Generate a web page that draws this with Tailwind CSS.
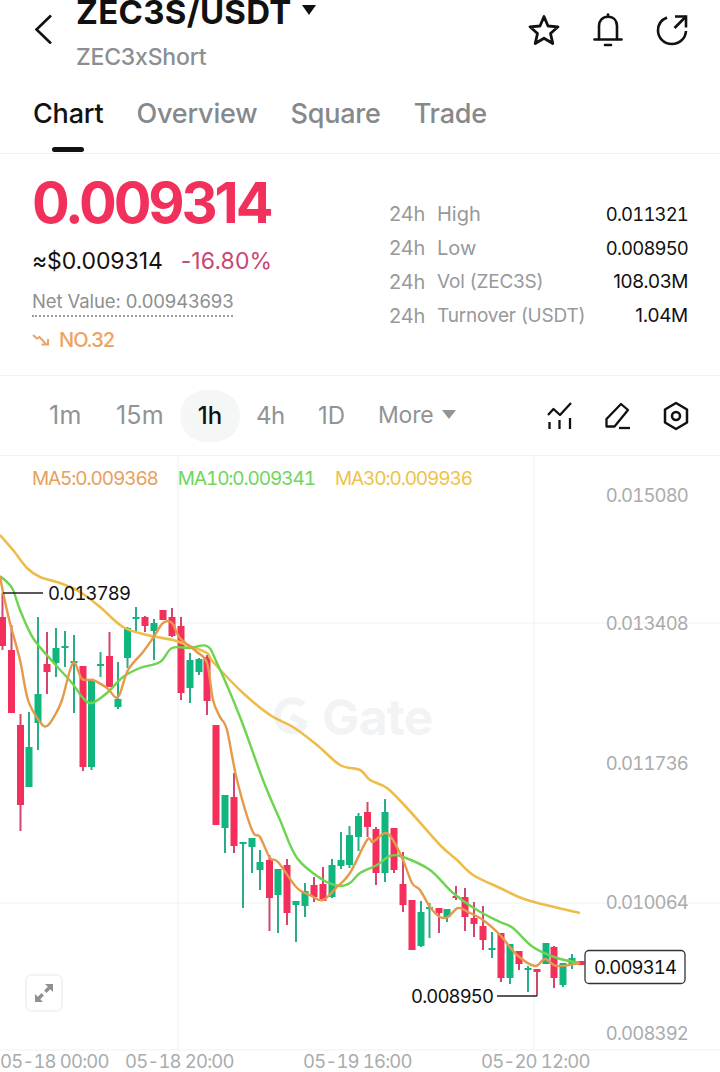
<!DOCTYPE html>
<html lang="en">
<head>
    <meta charset="UTF-8" />
    <meta name="viewport" content="width=device-width, initial-scale=1.0"/>
    <title>ZEC3S/USDT</title>
    <script src="https://cdn.jsdelivr.net/npm/@tailwindcss/browser@4"></script>
</head>
<body class="bg-white font-['Inter',sans-serif] text-[#111] w-[720px] h-[1072px] overflow-hidden">

    <!-- Header -->
    <header class="flex h-[76px] pl-[32px] pr-[32px]">
        <svg class="mt-[14px] shrink-0" width="22" height="30" viewBox="0 0 22 30" fill="none" stroke="#111" stroke-width="2.6"><path d="M19 1.5 4.5 15.500 19 29.500"/></svg>
        <div class="ml-[22px] flex-1">
            <div class="flex items-center h-[24px]">
                <h1 class="text-[33px] leading-[24px] font-bold tracking-[0.3px] whitespace-nowrap">ZEC3S/USDT</h1>
                <div class="ml-[10px] -mt-[4px] w-0 h-0 border-x-[7px] border-x-transparent border-t-[10px] border-t-[#111]"></div>
            </div>
            <p class="mt-[20px] text-[23px] leading-[26px] font-medium text-[#8b8f91] tracking-[-0.2px]">ZEC3xShort</p>
        </div>
        <div class="flex gap-[30px] mt-[13px] mr-[-1px] h-[34px]">
            <svg width="34" height="34" viewBox="0 0 34 34" fill="none" stroke="#111" stroke-width="2.8" stroke-linejoin="round"><path d="M17 3.500 21 13 31 13.800 23.500 20.500 25.800 30.500 17 25.200 8.200 30.500 10.500 20.500 3 13.800 13 13Z"/></svg>
            <svg width="34" height="34" viewBox="0 0 34 34" fill="none" stroke="#111" stroke-width="2.6" stroke-linecap="round"><path d="M8 26V13C8 7.500 11.500 3.800 17 3.800S26 7.500 26 13V26"/><path d="M3.500 26.500H30.500"/><path d="M17 1.500V3.500"/><path d="M14 32H20"/></svg>
            <svg width="34" height="34" viewBox="0 0 34 34" fill="none" stroke="#111" stroke-width="2.6"><path d="M12 4.500C6.500 6.700 3 11.500 3 17.500 3 25 9.200 31 17 31 24.500 31 30.500 25.500 31 18"/><path d="M20 3.500H31V14.500"/><path d="M31 3.500 19.500 15"/></svg>
        </div>
    </header>

    <!-- Tabs -->
    <nav class="flex gap-[33px] pl-[33px] h-[78px] border-b border-[#f0f1f2] relative text-[27px] leading-[32px] font-medium text-[#85898b] tracking-[-0.2px] pt-[22px]">
        <span class="text-[#111]">Chart</span>
        <span>Overview</span>
        <span>Square</span>
        <span>Trade</span>
        <div class="absolute left-[52px] bottom-[1px] w-[32px] h-[5px] rounded-full bg-[#111]"></div>
    </nav>

    <!-- Price -->
    <section class="flex h-[222px] border-b border-[#f2f3f4]">
        <div class="w-[360px] pl-[32px] pt-[21px]">
            <div class="text-[56px] leading-[56px] font-bold text-[#f2305c] tracking-[-3.1px]">0.009314</div>
            <div class="flex mt-[16px] text-[23px] leading-[28px] tracking-[-0.1px]">
                <span>≈$0.009314</span>
                <span class="ml-[18px] text-[#c8476f] tracking-[0.1px]">-16.80%</span>
            </div>
            <div class="inline-block mt-[13px] text-[18.5px] leading-[27px] text-[#8c9092] tracking-[-0.1px] border-b-2 border-dotted border-[#9a9ea0]">Net Value: 0.00943693</div>
            <div class="flex items-center mt-[11px] text-[20px] leading-[24px] font-medium text-[#eda364] tracking-[-1px]">
                <svg class="mr-[9px]" width="18" height="14" viewBox="0 0 18 14" fill="none" stroke="#eda364" stroke-width="2"><path d="M1 2 5 5.500 7.500 4 14 11"/><path d="M9.500 11.500H16V6"/></svg>
                NO.32
            </div>
        </div>
        <div class="flex-1 pt-[43px] pr-[32px] pl-[29px] text-[20px] leading-[34px]">
            <div class="flex"><span class="text-[#97999b] w-[48px] tracking-[-0.2px]">24h</span><span class="text-[#97999b] flex-1">High</span><span class="text-[18.5px] tracking-[-0.85px] tabular-nums">0.011321</span></div>
            <div class="flex"><span class="text-[#97999b] w-[48px] tracking-[-0.2px]">24h</span><span class="text-[#97999b] flex-1">Low</span><span class="text-[18.5px] tracking-[-0.85px] tabular-nums">0.008950</span></div>
            <div class="flex"><span class="text-[#97999b] w-[48px] tracking-[-0.2px]">24h</span><span class="text-[#97999b] flex-1 text-[19px] tracking-[-0.2px]">Vol (ZEC3S)</span><span class="text-[19px] tracking-[-0.3px]">108.03M</span></div>
            <div class="flex"><span class="text-[#97999b] w-[48px] tracking-[-0.2px]">24h</span><span class="text-[#97999b] flex-1 text-[19px] tracking-[-0.2px]">Turnover (USDT)</span><span class="text-[19px] tracking-[-0.3px]">1.04M</span></div>
        </div>
    </section>

    <!-- Period bar -->
    <div class="flex items-center h-[80px] border-b border-[#f2f3f4] text-[24px] text-[#909496] relative">
        <span class="ml-[49px] w-[34px] text-[25px] tracking-[0.4px]">1m</span>
        <span class="ml-[33px] w-[48px] text-[25px] tracking-[0.2px]">15m</span>
        <span class="ml-[16px] w-[60px] h-[52px] rounded-full bg-[#f5f6f6] text-[#111] font-medium flex items-center justify-center">1h</span>
        <span class="ml-[16px] w-[27px] tracking-[-0.5px]">4h</span>
        <span class="ml-[35px] w-[27px]">1D</span>
        <span class="ml-[33px] text-[23px] tracking-[-0.2px] w-[55px]">More</span>
        <div class="ml-[9px] -mt-[2px] w-0 h-0 border-x-[7px] border-x-transparent border-t-[9px] border-t-[#909496]"></div>
        <div class="ml-auto mr-[30px] flex gap-[30px]">
            <svg width="28" height="30" viewBox="0 0 28 30" fill="none" stroke="#111" stroke-width="2.3" stroke-linejoin="round"><path d="M2 14 7.500 8 14 14 25 2"/><path d="M3.500 21V28M13.500 19V28M24 17V28"/></svg>
            <svg width="28" height="30" viewBox="0 0 28 30" fill="none" stroke="#111" stroke-width="2.300" stroke-linejoin="round"><path d="M17 3 24 9 10.500 25.500H2.500V18Z"/><path d="M15 27H26"/></svg>
            <svg width="28" height="30" viewBox="0 0 28 30" fill="none" stroke="#111" stroke-width="2.500" stroke-linejoin="round"><path d="M14 2 25 8.500V21.500L14 28 3 21.500V8.500Z"/><circle cx="14" cy="15" r="4"/></svg>
        </div>
    </div>

    <!-- Chart: free canvas, y starts at 456 -->
    <div class="relative h-[616px]">
        <svg class="absolute inset-0 tabular-nums tracking-[-0.85px]" width="720" height="616" viewBox="0 456 720 616" font-family="Inter, sans-serif" font-size="18.5">
            <path d="M178 456V1050M534 456V1050M0 623H720M0 903H720M0 1050H720" stroke="#f5f6f6" stroke-width="1.500"/>
            <path d="M303 705A15 15 0 1 0 305 724M291 716l12 7-8 10" fill="none" stroke="#f2f3f4" stroke-width="7"/>
            <text x="322" y="735" font-size="50" font-weight="700" fill="#f2f3f4">Gate</text>
            <g id="candles"></g>
            <path id="ma30" fill="none" stroke="#eebd49" stroke-width="2.600" stroke-linejoin="round"/>
            <path id="ma10" fill="none" stroke="#6cd44f" stroke-width="2.400" stroke-linejoin="round"/>
            <path id="ma5" fill="none" stroke="#e59a4a" stroke-width="2.400" stroke-linejoin="round"/>

            <g fill="#a9acae">
                <text x="688" y="502" text-anchor="end">0.015080</text>
                <text x="688" y="630" text-anchor="end">0.013408</text>
                <text x="688" y="770" text-anchor="end">0.011736</text>
                <text x="688" y="909" text-anchor="end">0.010064</text>
                <text x="688" y="1040" text-anchor="end">0.008392</text>
                <text x="0" y="1068">05-18 00:00</text>
                <text x="125" y="1068">05-18 20:00</text>
                <text x="303" y="1068">05-19 16:00</text>
                <text x="481" y="1068">05-20 12:00</text>
            </g>
            <path d="M3 593H43" stroke="#222" stroke-width="1.300"/>
            <text x="48" y="600" fill="#111">0.013789</text>
            <path d="M497 996H537" stroke="#222" stroke-width="1.300"/>
            <text x="411" y="1003" fill="#111">0.008950</text>
            <rect x="585" y="950.500" width="100" height="33" rx="4" fill="#fff" stroke="#333" stroke-width="1.300"/>
            <text x="594" y="974" fill="#111">0.009314</text>
        </svg>
        <div class="absolute left-[32px] top-[13px] flex gap-[20px] text-[19px] leading-[20px] tabular-nums tracking-[-1.1px]">
            <span class="text-[#e8a05c]">MA5:0.009368</span>
            <span class="text-[#6fd65a]">MA10:0.009341</span>
            <span class="text-[#efc24a]">MA30:0.009936</span>
        </div>
        <div class="absolute left-[25px] top-[518px] w-[38px] h-[38px] rounded-[6px] border-2 border-[#f2f3f3] bg-white flex items-center justify-center">
            <svg width="20" height="20" viewBox="0 0 20 20" fill="#8e9193"><path d="M11 1H19V9L16.200 6.200 12.500 9.900 10.100 7.500 13.800 3.800Z"/><path d="M1 11V19H9L6.200 16.200 9.900 12.500 7.500 10.100 3.800 13.800Z"/></svg>
        </div>
    </div>

    <script>
        // x, bodyTop, bodyBottom, wickTop, wickBottom, up(1 = green)
        const data = [
            [2.5,617,646,593,650,0],[11.5,650,713,625,713,0],[20.5,725,805,714,831,0],[29,747,787,712,787,1],
            [38,694,723,617,750,1],[47,664,672,632,694,0],[56,648,663,628,677,1],[65,646,648,631,667,1],
            [74,661,663,635,713,1],[83,666,767,666,771,0],[91.5,680,767,680,770,1],[100.5,664,666,652,677,1],
            [109.5,656,687,632,687,0],[118,699,707,662,709,1],[127.5,628,658,627,668,1],[136,617,619,607,632,1],
            [145,617,626,616,632,0],[154,623,631,619,660,1],[163,610,620,610,620,0],[172,617,636,608,637,0],
            [181,626,693,617,700,0],[190,660,688,653,703,1],[199,659,672,658,675,1],[207,657,701,655,715,0],
            [216,725,825,725,825,0],[225,795,828,795,853,1],[234,797,846,773,853,0],[243,842,844,842,908,1],
            [252,838,847,838,873,1],[260,862,870,850,890,1],[269.5,860,898,855,931,0],[278,869,895,869,933,1],
            [287,865,913,859,925,0],[296,901,905,901,942,1],[305,891,906,883,917,1],[314,885,897,877,902,0],
            [323,884,901,867,901,0],[332,865,897,859,898,1],[341,860,866,832,869,1],[349.5,835,865,826,868,1],
            [358.5,816,837,813,851,1],[367.5,812,827,802,837,0],[376,829,873,827,885,0],[385,812,873,799,882,1],
            [394,828,870,828,873,0],[403,884,905,852,912,0],[412,900,950,900,950,0],[421,912,946,901,947,1],
            [429.5,907,909,903,938,1],[439,908,913,908,933,0],[447,909,917,909,922,1],[456,896,898,886,900,0],
            [465,897,917,888,931,0],[474,918,924,902,937,0],[483,926,940,906,950,0],[492,948,950,932,958,1],
            [501,933,978,933,982,0],[510,944,978,944,984,1],[519,951,964,951,970,0],[528,968,970,966,992,1],
            [537,969,972,969,996,0],[546,943,964,943,964,1],[554,947,978,946,988,0],[563,963,985,963,987,1],
            [572,958,964,954,969,1],[581,961,965,961,965,0]
        ];
        document.getElementById('candles').innerHTML = data.map(c => {
            const color = c[5] ? '#10b67e' : '#f42f5b';
            const wick = c[5] ? '#2bab8b' : '#d2466f';
            return `<rect x="${c[0] - 1}" y="${c[3]}" width="2" height="${c[4] - c[3]}" fill="${wick}"/>` +
                   `<rect x="${c[0] - 3.5}" y="${c[1]}" width="7" height="${c[2] - c[1]}" fill="${color}"/>`;
        }).join('');

        // moving averages, smoothed through the points
        const lines = {
            ma30: [0,535,13,550,27,568,40,577,60,583,80,592,100,607,123,627,147,635,173,640,187,645,207,653,213,662,243,693,270,715,293,727,317,745,340,765,360,770,370,780,387,788,407,808,440,845,457,860,473,875,500,888,527,900,580,913],
            ma10: [0,576,12,588,20,610,33,638,53,662,72,683,83,698,92,703,107,693,123,677,140,668,160,662,172,648,190,648,207,646,217,663,240,717,263,780,280,820,297,858,323,880,340,886,350,883,360,873,377,865,390,856,403,857,430,870,453,893,477,910,500,922,513,928,533,947,557,958,580,963],
            ma5: [0,576,3,592,10,623,20,660,28,700,40,722,47,726,55,715,62,700,73,663,82,679,93,680,107,688,118,697,128,670,143,652,153,638,163,623,172,623,180,638,197,652,207,663,213,700,220,717,227,730,237,780,252,830,260,837,270,858,278,862,297,888,310,895,323,900,337,887,350,873,367,840,373,842,385,833,393,840,403,860,412,883,420,890,430,907,440,917,448,917,458,908,468,912,483,920,500,935,517,955,535,966,545,959,557,966,580,963]
        };
        Object.keys(lines).forEach(id => {
            const p = lines[id];
            let d = `M${p[0]} ${p[1]}`;
            for (let i = 0; i < p.length - 2; i += 2) {
                const x0 = p[i - 2] ?? p[i], y0 = p[i - 1] ?? p[i + 1];
                const x3 = p[i + 4] ?? p[i + 2], y3 = p[i + 5] ?? p[i + 3];
                d += `C${p[i] + (p[i + 2] - x0) / 6} ${p[i + 1] + (p[i + 3] - y0) / 6} ${p[i + 2] - (x3 - p[i]) / 6} ${p[i + 3] - (y3 - p[i + 1]) / 6} ${p[i + 2]} ${p[i + 3]}`;
            }
            document.getElementById(id).setAttribute('d', d);
        });
    </script>
</body>
</html>
